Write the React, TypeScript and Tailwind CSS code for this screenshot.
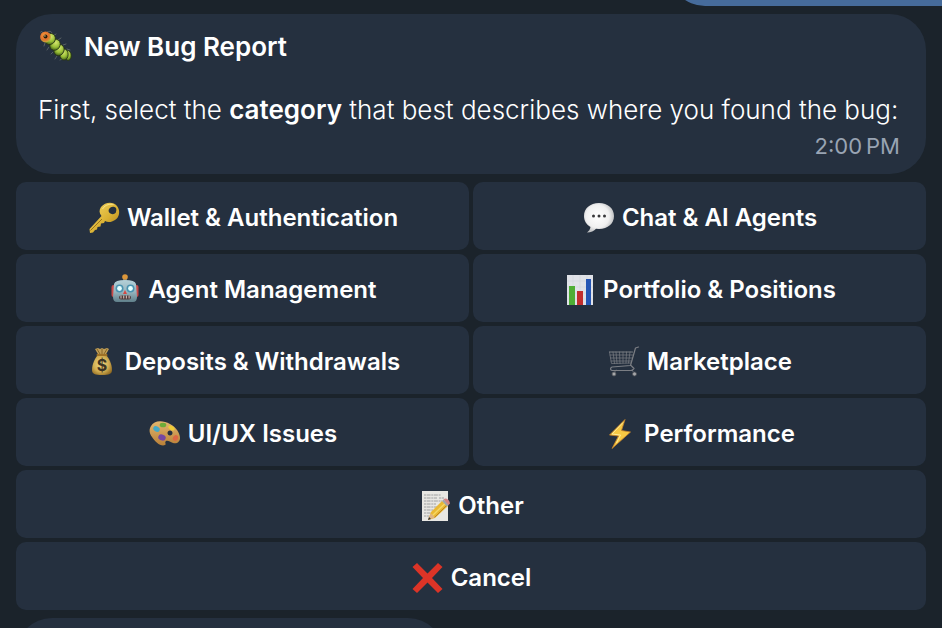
import type { ReactNode } from "react";

const Svg = ({ children }: { children: ReactNode }) => (
  <svg viewBox="0 0 34 34" className="size-[34px] shrink-0" aria-hidden="true">
    {children}
  </svg>
);

const BugIcon = () => (
  <Svg>
    <defs>
      <radialGradient id="bug-body" cx="45%" cy="30%" r="70%">
        <stop offset="0" stopColor="#d3e56e" />
        <stop offset="0.6" stopColor="#98bd36" />
        <stop offset="1" stopColor="#426018" />
      </radialGradient>
      <radialGradient id="bug-head" cx="40%" cy="35%" r="75%">
        <stop offset="0" stopColor="#f49a3c" />
        <stop offset="0.55" stopColor="#e0702c" />
        <stop offset="1" stopColor="#b8c443" />
      </radialGradient>
    </defs>
    <g stroke="#586064" strokeWidth="1" fill="none" strokeLinecap="round">
      <path d="M5 4Q4 1 2.5 3M9 3Q13 1 14 4M15 7l3-2M20 11l3-2M25 16l3-1M29 20l3 1M7 14l-1 3M11 18l-2 3M15 23l-2 2M19 27l-2 3M24 30l-2 1" />
    </g>
    <g stroke="#283516" strokeWidth="0.8" fill="url(#bug-body)">
      <ellipse cx="30" cy="26.5" rx="3.3" ry="5" transform="rotate(-5 30 26.5)" />
      <ellipse cx="26" cy="25.5" rx="4.2" ry="5.6" />
      <ellipse cx="21" cy="21" rx="5" ry="5.8" transform="rotate(25 21 21)" />
      <ellipse cx="17" cy="15.8" rx="5" ry="5.8" transform="rotate(35 17 15.8)" />
      <ellipse cx="12" cy="10" rx="5.2" ry="5.8" transform="rotate(35 12 10)" />
    </g>
    <circle cx="7.5" cy="8" r="5.4" fill="url(#bug-head)" />
    <circle cx="7.5" cy="7.5" r="2" fill="#291c0a" />
    <circle cx="6.9" cy="6.9" r="0.7" fill="#fff0b0" />
  </Svg>
);

const KeyIcon = () => (
  <Svg>
    <defs>
      <linearGradient id="key-gold" x1="0" y1="0" x2="1" y2="1">
        <stop offset="0" stopColor="#f5d968" />
        <stop offset="0.55" stopColor="#dab234" />
        <stop offset="1" stopColor="#a97817" />
      </linearGradient>
    </defs>
    <path
      fillRule="evenodd"
      fill="url(#key-gold)"
      d="M14 6C18 1 26 0 30 5c4 5 2 12-2 14-3 2-7 3-10 1l-1 2-3 .5-.5 3-3 .5-.5 2.5-2 .5-2 2.5-3 .5-.5-4L14.5 15C12 12 12 9 14 6Zm9.5.5c-2.5 1.500-2.500 5 0 6 2 1.500 5 .5 5.500-1.500 1-3 0-4.500-1.500-5-1-.5-3-.5-4 .5Z"
    />
    <path d="M15 18 3.5 29.5" stroke="#9b741b" strokeWidth="1" />
    <path d="M15.5 8c3-5 8-5 11-4.500" stroke="#ffed9a" strokeWidth="0.8" fill="none" />
  </Svg>
);

const ChatIcon = () => (
  <Svg>
    <defs>
      <radialGradient id="chat-fill" cx="45%" cy="45%" r="55%">
        <stop offset="0" stopColor="#ffffff" />
        <stop offset="0.7" stopColor="#f0f0f0" />
        <stop offset="1" stopColor="#c0c1c3" />
      </radialGradient>
    </defs>
    <path
      fill="url(#chat-fill)"
      d="M17 2C8 2 2 7.5 2 15c0 5 2.5 8.5 6.5 11-.5 2.500-1.500 4-3.500 5.500 4 0 7-1.700 9-3.800l3 .3c9 0 15-5.500 15-13S26 2 17 2Z"
    />
    <g fill="#38383a">
      <circle cx="11.5" cy="15" r="1.5" />
      <circle cx="17" cy="15" r="1.5" />
      <circle cx="22.5" cy="15" r="1.5" />
    </g>
  </Svg>
);

const RobotIcon = () => (
  <Svg>
    <defs>
      <linearGradient id="robot-face" x1="0" y1="0" x2="0" y2="1">
        <stop offset="0" stopColor="#b4d0d8" />
        <stop offset="0.55" stopColor="#96b4bd" />
        <stop offset="1" stopColor="#5f7f8a" />
      </linearGradient>
    </defs>
    <path d="M17 4v6" stroke="#647d85" strokeWidth="4" />
    <circle cx="17" cy="4" r="2.8" fill="#dc963a" />
    <rect x="3.5" y="12" width="4" height="12" rx="2" fill="#c94a48" />
    <rect x="26.5" y="12" width="4" height="12" rx="2" fill="#c94a48" />
    <path fill="url(#robot-face)" d="M6 11q1-4 11-4t11 4l1 13q0 5-4 5H9q-4 0-4-5Z" />
    <circle cx="11.5" cy="15.5" r="4" fill="#4a93b0" />
    <circle cx="22.5" cy="15.5" r="4" fill="#4a93b0" />
    <circle cx="11.5" cy="15.5" r="2.4" fill="#e5ffff" />
    <circle cx="22.5" cy="15.5" r="2.4" fill="#e5ffff" />
    <path d="m17 17-2 4h4Z" fill="#d54943" />
    <rect x="11" y="22.5" width="12" height="4" rx="2" fill="#4e3a3b" />
    <path d="M13 22.5v3m2.7-3v3m2.7-3v3m2.7-3v3" stroke="#cdb9b4" strokeWidth="1.1" />
  </Svg>
);

const ChartIcon = () => (
  <Svg>
    <rect x="4" y="2" width="26" height="30" fill="#e0e2e8" />
    <path d="M4 8h26M4 14h26M4 20h26M4 26h26M10 2v30M17 2v30M24 2v30" stroke="#ccd0d8" strokeWidth="0.5" />
    <rect x="6" y="13" width="6" height="19" fill="#4fae35" />
    <rect x="14" y="18" width="6" height="14" fill="#c22e2e" />
    <rect x="23" y="6" width="5" height="26" fill="#2455b4" />
  </Svg>
);

const MoneyIcon = () => (
  <Svg>
    <defs>
      <radialGradient id="money-bag" cx="45%" cy="45%" r="65%">
        <stop offset="0" stopColor="#eed984" />
        <stop offset="0.6" stopColor="#d0ac50" />
        <stop offset="1" stopColor="#8f6820" />
      </radialGradient>
    </defs>
    <path fill="#c09d55" d="m10 4 3-1 2 1 2-1 2 1 3-1 2 1-4 7h-6Z" />
    <path d="m12 4 3 5m2-5v5m5-5-3 5" stroke="#76571c" strokeWidth="0.8" />
    <path fill="url(#money-bag)" d="M13 10h8c3 3 6 9 6 15 0 4-3 5-10 5S7 29 7 25c0-6 3-12 6-15Z" />
    <path d="M12.5 10h9" stroke="#9e7126" strokeWidth="2" strokeLinecap="round" />
    <text x="17" y="26" textAnchor="middle" fontSize="16" fontWeight="700" fill="#3c3423" fontFamily="Inter, sans-serif">$</text>
  </Svg>
);

const CartIcon = () => (
  <Svg>
    <g fill="none" stroke="#7b7e84" strokeLinecap="round" strokeLinejoin="round">
      <path strokeWidth="1.2" d="m31.5 2-3 1-5 17.500L5 22c-2 1-2 3 0 3.500h20l2-2-3-3M2.500 7h23" />
      <path strokeWidth="0.7" d="m2.500 7 2 11.500 19.500-.5M6 7l1.500 11.500M9 7l1 11.500M12.500 7l.5 11.500M16 7v11M19.500 7 19 18M23 7l-1.500 11M3 10h23M3.500 13h22M4 16h20.500M9 25l-2 3M25 25l2 3" />
    </g>
    <g fill="#a6a7aa" stroke="#4d5157" strokeWidth="0.8">
      <circle cx="7" cy="29" r="2" />
      <circle cx="27.5" cy="29" r="2" />
    </g>
  </Svg>
);

const PaletteIcon = () => (
  <Svg>
    <defs>
      <linearGradient id="palette-wood" x1="0" y1="0" x2="0" y2="1">
        <stop offset="0" stopColor="#e2b66e" />
        <stop offset="1" stopColor="#b98038" />
      </linearGradient>
    </defs>
    <path
      fillRule="evenodd"
      fill="url(#palette-wood)"
      d="M3 9C6 3 15 3 22 7c6 3 10 9 10 14 0 4-3 6-7 5-3-1-5-3-7-2-2 2 1 3-1 4-4 2-10-3-13-8C1 16 1 12 3 9Zm19 4.500c-1.500 0-2.500 1-2.500 2.500s1 2.500 2.500 2.500 2.500-1 2.500-2.500-1-2.500-2.500-2.500Z"
    />
    <ellipse cx="15" cy="8" rx="3.3" ry="2.3" fill="#6dac39" />
    <ellipse cx="8.5" cy="12" rx="3.4" ry="2.6" fill="#43a9c7" transform="rotate(30 8.5 12)" />
    <ellipse cx="23.5" cy="11" rx="3.4" ry="2" fill="#edcc37" transform="rotate(30 23.5 11)" />
    <ellipse cx="14" cy="20.5" rx="3.8" ry="3" fill="#7546a3" transform="rotate(20 14 20.5)" />
    <ellipse cx="27.5" cy="21" rx="2.4" ry="3" fill="#dd6744" transform="rotate(35 27.5 21)" />
  </Svg>
);

const BoltIcon = () => (
  <Svg>
    <path
      fill="#f6c844"
      stroke="#c7822a"
      strokeWidth="0.8"
      strokeLinejoin="round"
      d="M21 2.500 5.500 18l9 1L8 31.500 26.500 15l-9-1.500Z"
    />
    <path d="M19 5.500 8 17l8.500 1-4 8" stroke="#ffec99" strokeWidth="1" fill="none" />
  </Svg>
);

const NoteIcon = () => (
  <Svg>
    <rect x="4" y="2" width="26" height="30" fill="#e8e7e3" />
    <path
      d="M6 6h17M6 9h13M21 9h5M6 12h18M6 15h12M6 18h14M6 21h9M6 24h7M6 27h5"
      stroke="#96979a"
      strokeWidth="0.9"
      strokeDasharray="2 .6 4 .7"
    />
    <path d="m24 12 6 5-13 12-7 2 3-8Z" fill="#e9b834" />
    <path d="m27 14.500-13 12.500" stroke="#f6d765" strokeWidth="1.5" />
    <path d="m29 16-13 13" stroke="#bd8420" strokeWidth="1" />
    <path d="m25.500 10.500 1.500-1q4 0 5 5l-2 2Z" fill="#d58383" />
    <path d="m24 12 1.500-1.500 5 5.500-1.500 1.500Z" fill="#a2a4a9" />
    <path d="m12.500 24 4.500 4.500-7 2.500Z" fill="#dfb583" />
    <path d="m11 28-1 3 3-1Z" fill="#333" />
  </Svg>
);

const CrossIcon = () => (
  <Svg>
    <path d="m6 2 10.500 10.500L27 2l4.500 4L21 17l10.500 11-4.500 4-10.500-10.500L6 32l-4.500-4L12 17 1.500 6Z" fill="#dc3427" />
  </Svg>
);

const categories = [
  { icon: KeyIcon, label: "Wallet & Authentication" },
  { icon: ChatIcon, label: "Chat & AI Agents" },
  { icon: RobotIcon, label: "Agent Management" },
  { icon: ChartIcon, label: "Portfolio & Positions" },
  { icon: MoneyIcon, label: "Deposits & Withdrawals" },
  { icon: CartIcon, label: "Marketplace" },
  { icon: PaletteIcon, label: "UI/UX Issues" },
  { icon: BoltIcon, label: "Performance" },
  { icon: NoteIcon, label: "Other", wide: true },
  { icon: CrossIcon, label: "Cancel", wide: true },
];

const App = () => (
  <div className="flex min-h-screen flex-col gap-2 overflow-hidden bg-[#1b232b] font-['Inter',sans-serif] text-white">
    {/* tail end of the previous outgoing message */}
    <div className="flex h-1.5 items-end justify-end overflow-hidden">
      <div className="h-20 w-[29%] shrink-0 rounded-bl-[36px] bg-[#466b9b]" />
    </div>

    <main className="flex flex-col gap-2 px-4">
      <article className="rounded-[36px] bg-[#25303f] pt-4 pr-3 pb-3 pl-[22px]">
        <h1 className="flex h-8 items-center gap-3 text-[26px] font-semibold">
          <BugIcon />
          New Bug Report
        </h1>
        <p className="mt-8 text-[26px] leading-8 font-[350]">
          First, select the <strong className="font-semibold">category</strong> that best describes where you found the bug:
        </p>
        <time className="mt-1 mr-3.5 block text-right text-[22px] leading-8 text-[#99a4b3]">2:00{"\u2009"}PM</time>
      </article>

      <div className="grid grid-cols-2 gap-1">
        {categories.map(({ icon: Icon, label, wide }) => (
          <button
            key={label}
            type="button"
            className={`flex h-17 items-center justify-center gap-1.5 rounded-[10px] bg-[#25303f] pt-1 text-2xl font-semibold ${wide ? "col-span-2" : ""}`}
          >
            <Icon />
            {label}
          </button>
        ))}
      </div>
    </main>

    {/* top of the next incoming message */}
    <div className="h-2.5 overflow-hidden px-4">
      <div className="h-20 w-[47%] rounded-t-[36px] bg-[#25303f]" />
    </div>
  </div>
);

export default App;
